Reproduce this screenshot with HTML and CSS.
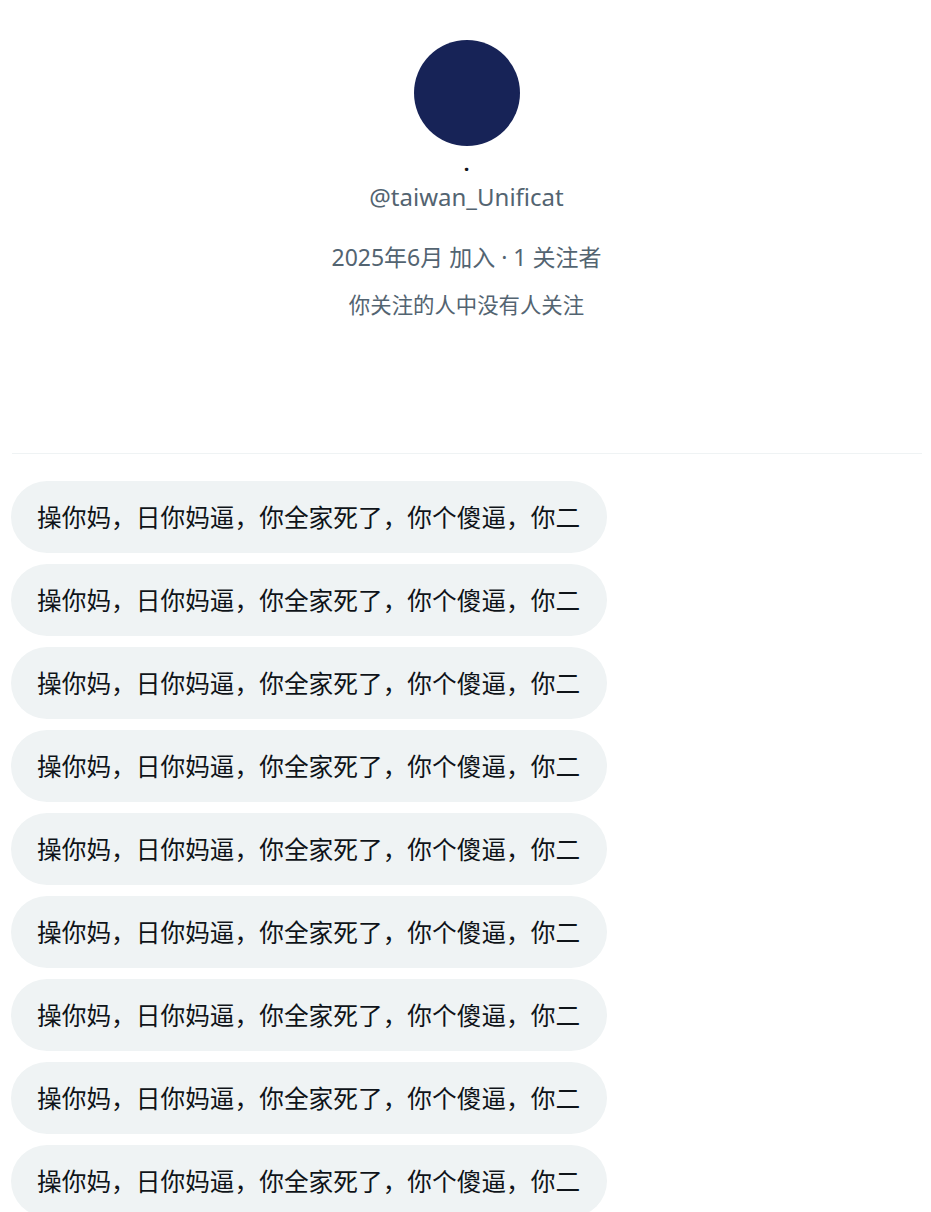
FILE: index.html
```html
<!DOCTYPE html>
<html lang="zh-CN">
<head>
<meta charset="utf-8">
<link rel="stylesheet" href="styles.css">
</head>
<body>
<div class="page">
  <section class="profile">
    <div class="avatar"></div>
    <div class="name">·</div>
    <div class="handle">@taiwan_Unificat</div>
    <div class="meta">2025年6月 加入 · 1 关注者</div>
    <div class="note">你关注的人中没有人关注</div>
  </section>
  <hr class="divider">
  <section class="messages">
    <div class="bubble">操你妈，日你妈逼，你全家死了，你个傻逼，你二</div>
    <div class="bubble">操你妈，日你妈逼，你全家死了，你个傻逼，你二</div>
    <div class="bubble">操你妈，日你妈逼，你全家死了，你个傻逼，你二</div>
    <div class="bubble">操你妈，日你妈逼，你全家死了，你个傻逼，你二</div>
    <div class="bubble">操你妈，日你妈逼，你全家死了，你个傻逼，你二</div>
    <div class="bubble">操你妈，日你妈逼，你全家死了，你个傻逼，你二</div>
    <div class="bubble">操你妈，日你妈逼，你全家死了，你个傻逼，你二</div>
    <div class="bubble">操你妈，日你妈逼，你全家死了，你个傻逼，你二</div>
    <div class="bubble">操你妈，日你妈逼，你全家死了，你个傻逼，你二</div>
  </section>
</div>
</body>
</html>
```
FILE: styles.css
```css
html, body {
  margin: 0;
  padding: 0;
  background: #ffffff;
}
body {
  font-family: "Noto Sans", "Noto Sans CJK SC", sans-serif;
  color: #0f1419;
  overflow: hidden;
}
.page {
  width: 931px;
}
.profile {
  display: flex;
  flex-direction: column;
  align-items: center;
  padding-top: 40px;
  padding-left: 2px;
}
.avatar {
  width: 106px;
  height: 106px;
  border-radius: 50%;
  background: #172357;
}
.name {
  margin-top: 13px;
  font-size: 20px;
  line-height: 20px;
  font-weight: 700;
  color: #0f1419;
}
.handle {
  margin-top: 3px;
  font-size: 24px;
  line-height: 30px;
  color: #536471;
}
.meta {
  margin-top: 30px;
  font-size: 23px;
  line-height: 30px;
  color: #536471;
}
.note {
  margin-top: 19px;
  font-size: 21.4px;
  line-height: 28px;
  color: #536471;
}
.divider {
  margin: 134px 9px 0 12px;
  border: 0;
  border-top: 1px solid #eff3f4;
  height: 0;
}
.messages {
  display: flex;
  flex-direction: column;
  align-items: flex-start;
  gap: 11px;
  padding: 27px 0 0 11px;
}
.bubble {
  box-sizing: border-box;
  width: 596px;
  height: 72px;
  display: flex;
  align-items: center;
  padding: 0 26px 3px;
  border-radius: 36px;
  background: #eff3f4;
  font-family: "Noto Sans CJK SC", sans-serif;
  font-size: 24.7px;
  color: #0f1419;
  white-space: nowrap;
  overflow: hidden;
}
```
